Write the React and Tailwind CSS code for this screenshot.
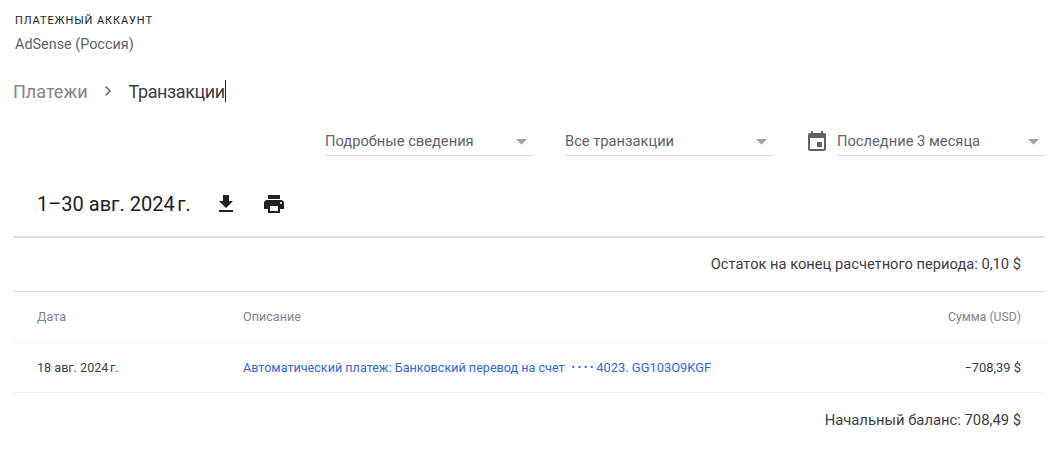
function Select({ label }) {
  return (
    <div className="flex h-[29px] w-[208px] items-center justify-between border-b border-[#e0e0e0] pt-[1px]">
      <span className="text-[14.7px] text-[#5f6368]">{label}</span>
      <svg width="11" height="6" viewBox="0 0 11 6" className="mr-[6px] mt-[1px]">
        <path d="M0 0h11L5.500 5.500z" fill="#9aa0a6" />
      </svg>
    </div>
  );
}

export default function App() {
  return (
    <div className="h-[450px] w-[1056px] overflow-hidden bg-white pl-[13px] pr-[11px] font-['Roboto',sans-serif] text-[#3c4043]">
      <div className="pl-[2px] pt-[14px]">
        <div className="h-[13px] text-[11px] leading-[13px] tracking-[0.9px] text-[#202124]">ПЛАТЕЖНЫЙ АККАУНТ</div>
        <div className="mt-[9px] text-[14.4px] leading-[18px] text-[#5f6368]">AdSense (Россия)</div>
      </div>

      <div className="mt-[24px] flex h-[26px] items-center text-[18px]">
        <span className="text-[#80868b]">Платежи</span>
        <svg width="20" height="20" viewBox="0 0 24 24" className="ml-[10px] mr-[11px]" fill="#5f6368">
          <path d="M9.700 6 8.500 7.200 13.300 12l-4.800 4.800 1.200 1.200 6-6z" />
        </svg>
        <span className="tracking-[-0.4px] text-[#3c4043]">Транзакции</span>
        <span className="h-[22px] w-[1px] bg-[#202124]" />
      </div>

      <div className="mt-[23px] flex items-center justify-end">
        <Select label="Подробные сведения" />
        <div className="ml-[32px]">
          <Select label="Все транзакции" />
        </div>
        <svg width="24" height="24" viewBox="0 0 24 24" fill="#5f6368" className="ml-[32px] mr-[8px]">
          <path d="M19 3h-1V1h-2v2H8V1H6v2H5c-1.100 0-2 .9-2 2v14c0 1.100.9 2 2 2h14c1.100 0 2-.9 2-2V5c0-1.100-.9-2-2-2zm0 16H5V8h14v11zM12 12h5v5h-5z" />
        </svg>
        <Select label="Последние 3 месяца" />
      </div>

      <div className="mt-[28px] flex h-[40px] items-center pl-[24px]">
        <h2 className="w-[153px] whitespace-nowrap text-[20px] text-[#202124]">1–30 авг. 2024{'\u202f'}г.</h2>
        <svg width="24" height="24" viewBox="0 0 24 24" fill="#202124" className="ml-[24px]">
          <path d="M19 9h-4V3H9v6H5l7 7 7-7zM5 18v2h14v-2H5z" />
        </svg>
        <svg width="24" height="24" viewBox="0 0 24 24" fill="#202124" className="ml-[24px]">
          <path d="M19 8H5c-1.660 0-3 1.340-3 3v6h4v4h12v-4h4v-6c0-1.660-1.340-3-3-3zm-3 11H8v-5h8v5zm3-7c-.55 0-1-.45-1-1s.45-1 1-1 1 .45 1 1-.45 1-1 1zm-1-9H6v4h12V3z" />
        </svg>
      </div>

      <div className="mt-[12px] border-t-2 border-[#e0e0e0]" />

      <div className="flex h-[54px] items-center justify-end border-b border-[#e0e0e0] pr-[24px] text-[14.7px] text-[#3c4043]">
        Остаток на конец расчетного периода: 0,10 $
      </div>

      <div className="flex h-[51px] items-center border-b border-[#f1f3f4] px-[24px] text-[12.6px] text-[#80868b]">
        <div className="w-[206px]">Дата</div>
        <div className="flex-1">Описание</div>
        <div className="text-[12.2px]">Сумма (USD)</div>
      </div>

      <div className="flex h-[50px] items-center border-b border-[#f1f3f4] px-[24px] pt-[1px] text-[12.6px]">
        <div className="w-[206px] text-[#3c4043]">18 авг. 2024{'\u202f'}г.</div>
        <a className="flex flex-1 items-center text-[#3367d6]">
          Автоматический платеж: Банковский перевод на счет
          <span className="ml-[7px] text-[10px] tracking-[2.800px]">••••</span>
          <span className="text-[12.9px]">4023. GG103O9KGF</span>
        </a>
        <div className="text-[12.9px] text-[#3c4043]">−708,39 $</div>
      </div>

      <div className="flex h-[55px] items-center justify-end pr-[24px] text-[14.8px] text-[#3c4043]">
        Начальный баланс: 708,49 $
      </div>
    </div>
  );
}
